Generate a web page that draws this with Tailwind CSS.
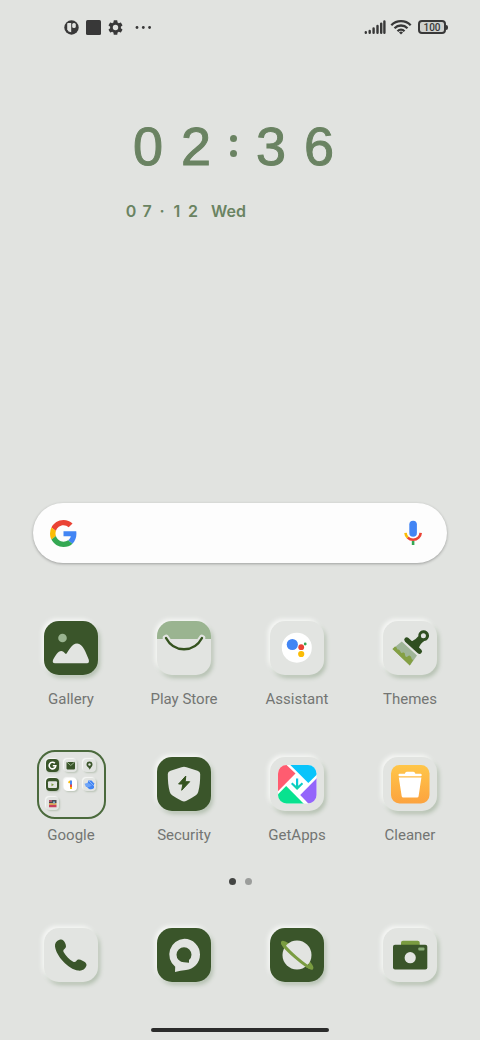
<!DOCTYPE html>
<html lang="en">
<head>
  <meta charset="UTF-8" />
  <meta name="viewport" content="width=device-width, initial-scale=1.0"/>
  <title>Home Screen</title>
  <script src="https://cdn.jsdelivr.net/npm/@tailwindcss/browser@4"></script>
</head>
<body class="min-h-screen flex flex-col bg-[#e1e3e0] font-[Roboto,sans-serif] text-[#737573]">

  <!-- Status bar -->
  <header class="h-[54px] shrink-0 flex items-center justify-between pl-16 pr-8 text-[#383838]">
    <div class="flex items-center gap-[7px]">
      <svg class="size-[15px]" viewBox="0 0 15 15">
        <circle cx="7.5" cy="7.5" r="7.2" fill="currentColor"/>
        <path d="M4 3h3.2v9.2Q4 12 3.2 9.5V4Q3.2 3 4 3Z" fill="#e1e3e0"/>
        <rect x="8.2" y="3" width="3.6" height="5" rx="1.6" fill="#e1e3e0"/>
      </svg>
      <svg class="size-[15px]" viewBox="0 0 15 15"><rect width="15" height="15" rx="1.5" fill="currentColor"/></svg>
      <svg class="size-[15px]" viewBox="2 2 20 20" fill="currentColor">
        <path d="M19.14 12.94c.04-.3.06-.61.06-.94s-.02-.64-.07-.94l2.03-1.58a.49.49 0 0 0 .12-.61l-1.92-3.32a.49.49 0 0 0-.59-.22l-2.39.96a7 7 0 0 0-1.62-.94l-.36-2.54a.48.48 0 0 0-.48-.41h-3.84a.47.47 0 0 0-.47.41l-.36 2.54c-.59.24-1.13.57-1.62.94l-2.39-.96a.48.48 0 0 0-.59.22L2.74 8.87a.47.47 0 0 0 .12.61l2.03 1.58a6.6 6.6 0 0 0 0 1.88l-2.03 1.58a.49.49 0 0 0-.12.61l1.92 3.32c.12.22.37.29.59.22l2.39-.96c.5.38 1.03.7 1.62.94l.36 2.54c.05.24.24.41.48.41h3.84c.24 0 .44-.17.47-.41l.36-2.54c.59-.24 1.13-.56 1.62-.94l2.39.96c.22.08.47 0 .59-.22l1.92-3.32a.47.47 0 0 0-.12-.61zM12 15.6a3.6 3.6 0 1 1 0-7.2 3.6 3.6 0 0 1 0 7.2z"/>
      </svg>
      <svg class="ml-1 h-[15px] w-5" viewBox="0 0 20 15" fill="currentColor">
        <circle cx="3" cy="7.5" r="1.4"/><circle cx="9.3" cy="7.5" r="1.4"/><circle cx="15.6" cy="7.5" r="1.4"/>
      </svg>
    </div>
    <div class="flex items-center gap-1">
      <svg class="h-4 w-[22px]" viewBox="0 0 22 16" stroke="currentColor" stroke-width="2.4" stroke-linecap="round">
        <path d="M1.8 13.8v-.6M5.7 13.8v-1.8M9.6 13.8V9.5M13.5 13.8V7M17.2 13.8V4.6M20.4 13.8V2.4"/>
      </svg>
      <svg class="h-4 w-[22px]" viewBox="0 0 22 16" fill="none" stroke="currentColor" stroke-width="2.3">
        <path d="M1.3 6.2a13.5 13.5 0 0 1 19.4 0M4.5 9.2a9.2 9.2 0 0 1 13 0M7.5 12.2a5 5 0 0 1 7 0"/>
        <path d="M11 15.6l-2-2.2q2-1.6 4 0z" fill="currentColor" stroke="none"/>
      </svg>
      <div class="flex items-center pl-0.5">
        <span class="h-[14px] w-7 flex items-center justify-center rounded-[4px] border-2 border-[#383838] bg-[#cfd1ce] pt-px text-[10px] leading-none font-medium">100</span>
        <span class="h-[5px] w-0.5 rounded-r bg-[#383838]"></span>
      </div>
    </div>
  </header>

  <!-- Clock -->
  <section class="mt-[62px] text-[#6a8362]">
    <div class="flex pl-[124px] font-['Liberation_Sans',sans-serif] text-[54px] leading-[60px] text-center [-webkit-text-stroke:1px_#6a8362]">
      <span class="w-12">0</span><span class="w-12">2</span><span class="w-[27px] flex flex-col items-center justify-center gap-2"><i class="size-[7px] rounded-full bg-[#6a8362]"></i><i class="size-[7px] rounded-full bg-[#6a8362]"></i></span><span class="w-12">3</span><span class="w-12">6</span>
    </div>
    <div class="mt-[23px] flex pl-[123px] font-[Inter,sans-serif] text-base font-semibold text-center">
      <span class="w-4">0</span><span class="w-4">7</span><span class="w-[14px]">·</span><span class="w-4">1</span><span class="w-4">2</span><span class="ml-[10px]">Wed</span>
    </div>
  </section>

  <!-- Search -->
  <form class="mt-[280px] mx-[33px] h-[60px] shrink-0 flex items-center rounded-full bg-[#fdfdfd] pl-[17px] pr-5 shadow-[0_1px_3px_rgba(0,0,0,0.3)]">
    <svg class="size-[27px]" viewBox="0 0 48 48">
      <path fill="#ea4335" d="M24 9.5c3.54 0 6.71 1.22 9.21 3.6l6.85-6.85C35.9 2.38 30.47 0 24 0 14.62 0 6.51 5.38 2.56 13.22l7.98 6.19C12.43 13.72 17.74 9.5 24 9.5z"/>
      <path fill="#4285f4" d="M46.98 24.55c0-1.57-.15-3.09-.38-4.55H24v9.02h12.94c-.58 2.96-2.26 5.48-4.78 7.18l7.73 6c4.51-4.18 7.09-10.36 7.09-17.65z"/>
      <path fill="#fbbc05" d="M10.53 28.59A14.5 14.5 0 0 1 9.77 24c0-1.6.27-3.14.76-4.59l-7.98-6.19A23.9 23.9 0 0 0 0 24c0 3.88.92 7.54 2.56 10.78z"/>
      <path fill="#34a853" d="M24 48c6.48 0 11.93-2.13 15.89-5.81l-7.73-6c-2.15 1.45-4.92 2.3-8.16 2.3-6.26 0-11.57-4.22-13.47-9.91l-7.98 6.19C6.51 42.62 14.62 48 24 48z"/>
    </svg>
    <input type="search" aria-label="Search" class="min-w-0 flex-1 bg-transparent px-3 outline-none"/>
    <button type="button" aria-label="Voice search">
      <svg class="size-7" viewBox="0 0 28 28" fill="none" stroke-width="2.6">
        <rect x="10.3" y="1.7" width="7.6" height="16" rx="3.8" fill="#4285f4"/>
        <path d="M6.5 13.8q.2 2.8 2.200 4.800" stroke="#fbbc05"/>
        <path d="M8.700 18.600c3 2.900 7.800 2.900 10.800 0q2-2 2.200-4.800" stroke="#ea4335"/>
        <path d="M14.100 22v4" stroke="#34a853"/>
      </svg>
    </button>
  </form>

  <!-- App grid -->
  <main class="mt-[58px] grid grid-cols-4 gap-x-px gap-y-12 pl-[15px] pr-[14px] text-[15px] leading-5">
    <a href="#gallery" class="flex flex-col items-center gap-[14px]">
      <svg class="size-[54px] rounded-[15px] bg-[#3a552a] shadow-[-2px_-2px_4px_#f7f8f6,2px_3px_4px_#b4c0b0]" viewBox="0 0 54 54">
        <circle cx="18.5" cy="17" r="4.3" fill="#9ab490"/>
        <path d="M11 42.2q-3 0-2-3.2C11 35 14 30 17.3 30c2.7 0 3.5 3 4.8 3 2-2 5.5-10.5 11-10.5 6 0 9 10 11.6 16q1 3.700-1.700 3.700z" fill="#e2e4e1"/>
      </svg>
      Gallery
    </a>
    <a href="#play" class="flex flex-col items-center gap-[14px]">
      <svg class="size-[54px] rounded-[15px] bg-[#e2e4e1] shadow-[-2px_-2px_4px_#f7f8f6,2px_3px_4px_#b4c0b0]" viewBox="0 0 54 54">
        <path d="M0 0h54v18H0z" fill="#9ab490"/>
        <g fill="none" stroke-linecap="round">
          <path d="M9 17c8 15 28 15 36 0" stroke="#e2e4e1" stroke-width="6.5"/>
          <path d="M9 17c8 15 28 15 36 0" stroke="#35531f" stroke-width="2.4"/>
        </g>
      </svg>
      Play Store
    </a>
    <a href="#assistant" class="flex flex-col items-center gap-[14px]">
      <svg class="size-[54px] rounded-[15px] bg-[#e2e4e1] shadow-[-2px_-2px_4px_#f7f8f6,2px_3px_4px_#b4c0b0]" viewBox="0 0 54 54">
        <circle cx="26.8" cy="26.7" r="15" fill="#fff"/>
        <circle cx="22.3" cy="23.5" r="5.6" fill="#4285f4"/>
        <circle cx="31.2" cy="26.2" r="2.9" fill="#ea4335"/>
        <circle cx="31.2" cy="33" r="3.1" fill="#fbbc05"/>
        <circle cx="35.2" cy="23" r="1.4" fill="#34a853"/>
      </svg>
      Assistant
    </a>
    <a href="#themes" class="flex flex-col items-center gap-[14px]">
      <svg class="size-[54px] rounded-[15px] bg-[#e2e4e1] shadow-[-2px_-2px_4px_#f7f8f6,2px_3px_4px_#b4c0b0]" viewBox="0 0 54 54">
        <path d="M18.8 20.5L34 34.5l-7.2 10L9.5 28z" fill="#9fb598"/>
        <path d="M9.500 28l2.500-2.600q2 .5 2.400 3.200 2-.8 3 1.800.8 2.500 2.600 1.200 2.200-.6 2 2.400.4 2.600 2.600 1.600 2.200-2.400 3.600.6.600 3.400 2.400 2.200l-3.800 6.100z" fill="#84a044"/>
        <path d="M23.800 18.800L36.500 30.300" stroke="#2f4f20" stroke-width="5" stroke-linecap="round"/>
        <path d="M28.500 20.500q4.500-2 6.800-5.200a5.400 5.400 0 1 1 6 4.800q-4.300 2.700-5.600 7.400z" fill="#2f4f20"/>
        <circle cx="40.4" cy="14.8" r="2.5" fill="#e2e4e1"/>
      </svg>
      Themes
    </a>

    <a href="#google" class="flex flex-col items-center gap-[6px]">
      <!-- Folder -->
      <div class="-mt-[7px] grid size-[69px] grid-cols-3 content-start justify-items-center gap-y-[6px] rounded-[18px] border-2 border-[#4b6a3d] px-[5px] pt-[7px]">
        <svg class="size-[13px] rounded-[4px] bg-[#3a552a] shadow-[-1px_-1px_1px_#f7f8f6,1px_1px_2px_#b9c3b5]" viewBox="0 0 13 13">
          <path d="M8.9 4.3A3.3 3.3 0 1 0 9.8 6.7H6.8" fill="none" stroke="#fff" stroke-width="1.6"/>
        </svg>
        <svg class="size-[13px] rounded-[4px] bg-[#e2e4e1] shadow-[-1px_-1px_1px_#f7f8f6,1px_1px_2px_#b9c3b5]" viewBox="0 0 13 13">
          <rect x="2.5" y="3" width="8.5" height="7.4" rx=".8" fill="#3a552a"/>
          <path d="M3 3.2l3.7 3.3 3.8-3.3" fill="none" stroke="#9ab490"/>
        </svg>
        <svg class="size-[13px] rounded-[4px] bg-[#e2e4e1] shadow-[-1px_-1px_1px_#f7f8f6,1px_1px_2px_#b9c3b5]" viewBox="0 0 13 13">
          <path d="M6.5 2.6a3 3 0 0 1 3 3C9.5 7.8 7.5 8.5 6.8 10.8c-.8-2.5-3.3-3-3.3-5.2a3 3 0 0 1 3-3z" fill="#3a552a"/>
          <circle cx="6.5" cy="5.5" r="1.2" fill="#e2e4e1"/>
        </svg>
        <svg class="size-[13px] rounded-[4px] bg-[#3a552a] shadow-[-1px_-1px_1px_#f7f8f6,1px_1px_2px_#b9c3b5]" viewBox="0 0 13 13">
          <rect x="2" y="3.3" width="9" height="6.8" rx="1" fill="#e2e4e1"/>
          <path d="M5.5 5.2L8 6.7 5.5 8.2z" fill="#7a9c41"/>
        </svg>
        <svg class="size-[13px] rounded-[4px] bg-white shadow-[-1px_-1px_1px_#f7f8f6,1px_1px_2px_#b9c3b5]" viewBox="0 0 13 13" fill="none" stroke-width="1.9">
          <path d="M4.5 4.8l2.2-1.7" stroke="#fbbc05"/>
          <path d="M7 2.5v4.5" stroke="#4285f4"/>
          <path d="M7 6.5v2.5" stroke="#ea4335"/>
          <path d="M7 9v2" stroke="#fbbc05"/>
        </svg>
        <svg class="size-[13px] rounded-[4px] bg-[#e2e4e1] shadow-[-1px_-1px_1px_#f7f8f6,1px_1px_2px_#b9c3b5]" viewBox="0 0 13 13">
          <path d="M5.5 2.5h3L11 5.3V10q-2 2-5 1L3.5 8.5z" fill="#4285f4"/>
          <path d="M1.5 5.8l3.3-1L9 7.2 6.5 9H3z" fill="#6ea4f7"/>
          <path d="M5.5 2.5L11 8" stroke="#8ab4f8"/>
        </svg>
        <svg class="size-[13px] rounded-[4px] bg-[#e2e4e1] shadow-[-1px_-1px_1px_#f7f8f6,1px_1px_2px_#b9c3b5]" viewBox="0 0 13 13">
          <path d="M3 3h7.5v3H3z" fill="#4b4b55"/>
          <path d="M3 3h3v2H3z" fill="#a9566b"/>
          <path d="M3 6h7.5v2H3z" fill="#d8a35a"/>
          <path d="M3 8h7.5v2.2H3z" fill="#c9405c"/>
          <path d="M7 4.5h2v2H7z" fill="#7fb0c8"/>
        </svg>
      </div>
      Google
    </a>
    <a href="#security" class="flex flex-col items-center gap-[14px]">
      <svg class="size-[54px] rounded-[15px] bg-[#3a552a] shadow-[-2px_-2px_4px_#f7f8f6,2px_3px_4px_#b4c0b0]" viewBox="0 0 54 54">
        <path d="M27 9.800q1.200 0 2.500.4l11 3.500q2.700.9 2.700 3.300c0 6.500-.4 12.500-2 18q-.6 2.200-2.700 3.500-4 2.700-9 5.300-2.500 1.200-5 0-5-2.600-9-5.300-2.100-1.300-2.700-3.500C11.200 29.500 10.800 23.500 10.800 17q0-2.400 2.700-3.300l11-3.500q1.300-.4 2.500-.4z" fill="#e2e4e1"/>
        <path d="M28.800 19L21.600 27h4.300l-1.200 6.300 8-8.600h-4.500z" fill="#35531f" stroke="#35531f" stroke-linejoin="round"/>
      </svg>
      Security
    </a>
    <a href="#getapps" class="flex flex-col items-center gap-[14px]">
      <svg class="size-[54px] rounded-[15px] bg-[#e2e4e1] shadow-[-2px_-2px_4px_#f7f8f6,2px_3px_4px_#b4c0b0]" viewBox="0 0 54 54">
        <defs>
          <clipPath id="store"><rect x="8" y="8" width="38.5" height="38.5" rx="8.5"/></clipPath>
          <linearGradient id="arrow" x2="0" y2="1"><stop stop-color="#06c3f5"/><stop offset="1" stop-color="#14d59b"/></linearGradient>
        </defs>
        <g clip-path="url(#store)">
          <path d="M8 8h39v39H8z" fill="#fff"/>
          <path d="M8 8h8.5l9 8.6L8 34.2z" fill="#ff5c70"/>
          <path d="M20.3 8H47v9.5l-8.7 8.4z" fill="#09c4fb"/>
          <path d="M47 21v26h-8.2l-8.6-8.9z" fill="#9465fb"/>
          <path d="M8 37.2l8.2-8.2L34 47H8z" fill="#08e28f"/>
        </g>
        <path d="M26 21.5h2.2v7.3l3.6-3.4 1.4 1.5-6.1 6-6.1-6 1.4-1.5 3.6 3.4z" fill="url(#arrow)"/>
      </svg>
      GetApps
    </a>
    <a href="#cleaner" class="flex flex-col items-center gap-[14px]">
      <svg class="size-[54px] rounded-[15px] bg-[#e2e4e1] shadow-[-2px_-2px_4px_#f7f8f6,2px_3px_4px_#b4c0b0]" viewBox="0 0 54 54">
        <defs><linearGradient id="bin" x2="0" y2="1"><stop stop-color="#ffc649"/><stop offset="1" stop-color="#fca33f"/></linearGradient></defs>
        <rect x="8" y="8" width="38.5" height="38.5" rx="8.5" fill="url(#bin)"/>
        <path d="M16.5 16.700h5.300q.6-2 2-2h6.600q1.400 0 2 2h5.300q1 0 1 1.300t-1 1.300H16.500q-1 0-1-1.300t1-1.300zM15.800 20.500h22.600l-2.800 18.700q-.2 1.300-1.500 1.300H20.200q-1.300 0-1.500-1.300z" fill="#fff"/>
      </svg>
      Cleaner
    </a>
  </main>

  <!-- Page indicator -->
  <div class="mt-[33px] flex justify-center gap-[9px]">
    <span class="size-[7px] rounded-full bg-[#434543]"></span>
    <span class="size-[7px] rounded-full bg-[#9b9d9b]"></span>
  </div>

  <!-- Dock -->
  <nav class="mt-[43px] grid grid-cols-4 gap-x-px justify-items-center pl-[15px] pr-[14px]">
    <a href="#phone" aria-label="Phone">
      <svg class="size-[54px] rounded-[15px] bg-[#e2e4e1] shadow-[-2px_-2px_4px_#f7f8f6,2px_3px_4px_#b4c0b0]" viewBox="0 0 54 54">
        <path d="M15.5 11.800c2.500-1.200 4.300.4 5.500 3 1.300 2.900 1.500 4.700-.5 6.200-1.500 1.200-1.500 2-.6 3.500 2 3.500 5.300 6.800 8.900 9 1.400.9 2.500.8 3.500-.4 1.500-2 3.300-1.800 6.200-.4 2.700 1.200 4.800 2.900 3.800 5.400-1.300 3.400-4.300 5-8 4.500C24 41.200 12.300 28 11 18.500c-.4-3.200 1.500-5.500 4.500-6.700z" fill="#3a552a"/>
      </svg>
    </a>
    <a href="#messages" aria-label="Messages">
      <svg class="size-[54px] rounded-[15px] bg-[#3a552a] shadow-[-2px_-2px_4px_#f7f8f6,2px_3px_4px_#b4c0b0]" viewBox="0 0 54 54">
        <path d="M27.3 10.800a15.700 15.700 0 0 1 15.700 15.700c0 9-6.500 14.500-14 15.500q-5.500.5-11 2l.2-5.200a15.700 15.700 0 0 1 9.100-28z" fill="#e2e4e1"/>
        <path d="M27 19.300a7.500 7.500 0 0 1 7.500 7.500q0 3-2.500 5.300v2.700l-5-.5a7.500 7.500 0 0 1 0-15z" fill="#3a552a"/>
      </svg>
    </a>
    <a href="#browser" aria-label="Browser">
      <svg class="size-[54px] rounded-[15px] bg-[#3a552a] shadow-[-2px_-2px_4px_#f7f8f6,2px_3px_4px_#b4c0b0]" viewBox="0 0 54 54">
        <ellipse cx="27.2" cy="27.2" rx="19.5" ry="2.6" transform="rotate(41 27.2 27.2)" fill="none" stroke="#7a9c41" stroke-width="3"/>
        <circle cx="27" cy="27" r="14.5" fill="#e2e4e1"/>
        <path d="M7.7 27.2a19.5 2.6 0 0 0 39 0" transform="rotate(41 27.2 27.2)" fill="none" stroke="#7a9c41" stroke-width="3"/>
      </svg>
    </a>
    <a href="#camera" aria-label="Camera">
      <svg class="size-[54px] rounded-[15px] bg-[#e2e4e1] shadow-[-2px_-2px_4px_#f7f8f6,2px_3px_4px_#b4c0b0]" viewBox="0 0 54 54">
        <rect x="18" y="12.7" width="18.7" height="8" rx="2" fill="#7a9c41"/>
        <rect x="10" y="16.7" width="34.3" height="24.8" rx="2" fill="#3a552a"/>
        <circle cx="27.2" cy="29.7" r="5.6" fill="#e2e4e1"/>
        <rect x="35.3" y="19.4" width="6.2" height="3" rx="1" fill="#8aad78"/>
      </svg>
    </a>
  </nav>

  <!-- Gesture bar -->
  <div class="mx-auto mt-auto mb-2 h-1 w-[37%] rounded-full bg-[#2b2b2b]"></div>

</body>
</html>
